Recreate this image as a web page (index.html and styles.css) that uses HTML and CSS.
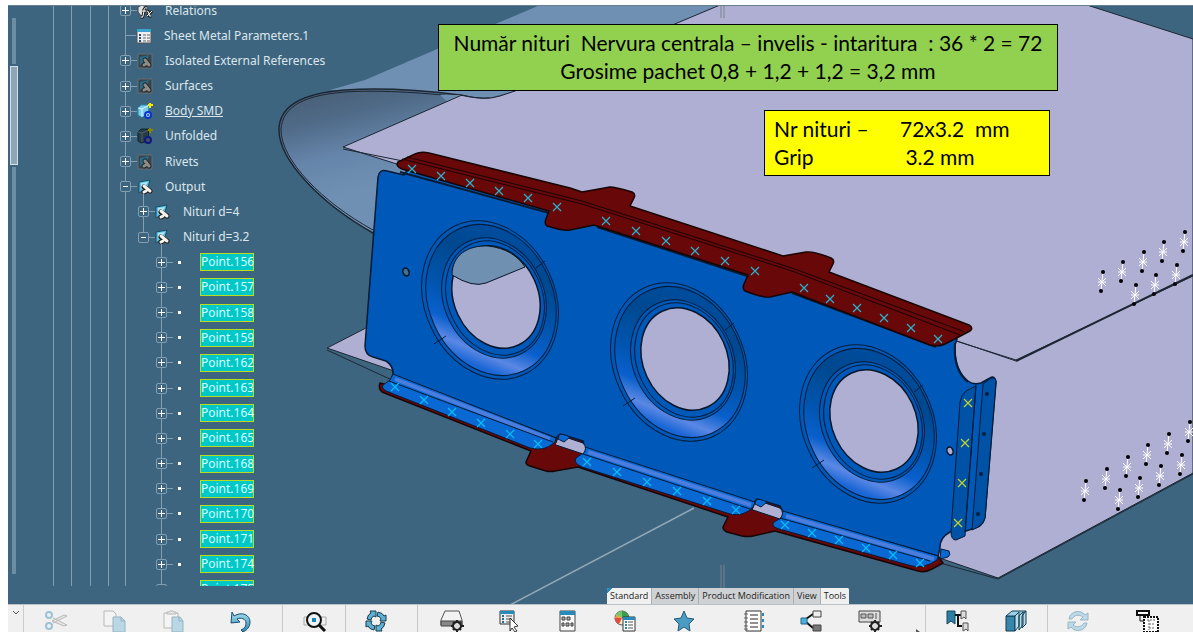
FILE: index.html
```
<!DOCTYPE html>
<html lang="ro">
<head>
<meta charset="utf-8">
<title>Nervura centrala</title>
<link rel="stylesheet" href="styles.css">
</head>
<body>
<svg class="defs" aria-hidden="true">
  <defs>
    <linearGradient id="nose" gradientUnits="userSpaceOnUse" x1="340" y1="88" x2="365" y2="190">
      <stop offset="0" stop-color="#4a6078"/><stop offset=".25" stop-color="#4f6a87"/><stop offset=".6" stop-color="#6584a9"/><stop offset="1" stop-color="#6f90b3"/>
    </linearGradient>
    <linearGradient id="ring" gradientUnits="userSpaceOnUse" x1="540" y1="260" x2="440" y2="350">
      <stop offset="0" stop-color="#004c9c"/><stop offset=".2" stop-color="#00488f"/><stop offset=".5" stop-color="#0054ae"/><stop offset=".72" stop-color="#0a60cc"/><stop offset=".86" stop-color="#5b88e4"/><stop offset=".96" stop-color="#1a66d6"/>
    </linearGradient>
    <linearGradient id="sky" x1="0" y1="0" x2="0" y2="1"><stop offset="0" stop-color="#a7dff0"/><stop offset="1" stop-color="#2f83ad"/></linearGradient>
    <g id="mark"><path d="M-4-4 4 4M4-4-4 4"/></g>
    <g id="rivet"><path d="M1-9-1 10M-4-3 4 5M4-3-4 5M-4 1H4" stroke="#fff" stroke-width="1"/><circle cx="1" cy="-9" r="2"/><circle cx="-1" cy="10" r="2"/></g>
    <g id="cutout">
      <ellipse cx="490" cy="300" rx="65" ry="82" transform="rotate(-25 490 300)" fill="#0059b8"/>
      <ellipse cx="491" cy="300" rx="62" ry="78" transform="rotate(-25 491 300)" fill="url(#ring)"/>
      <ellipse cx="494" cy="298" rx="50" ry="62" transform="rotate(-25 494 298)" fill="#0059b8"/>
      <ellipse cx="495" cy="298" rx="47" ry="59" transform="rotate(-25 495 298)" fill="none"/>
      <path d="m536 268 9-7M434 344l12-8" fill="none"/>
    </g>
    <symbol id="set" viewBox="0 0 16 16"><path d="M2 3 13 1 11 8 2 14Z" fill="#5bc0e0" stroke="#174c66"/><path d="m4 4 7-1-2 3-5 4Z" fill="#b4e8f5"/><path d="m7 8 6 4M7 13l2-1" stroke="#222" stroke-width="5" stroke-linecap="round"/><path d="m7 7 6 5M7 13l2-1" stroke="#f6f1ea" stroke-width="3" stroke-linecap="round"/></symbol>
    <symbol id="dimset" viewBox="0 0 16 16"><path d="M1 1h14v14H1Z" fill="#35454f" stroke="#6d6f72"/><path d="M3 4 12 2 10 8 3 12Z" fill="#286c8a"/><path d="m8 7 4 5M7 12l2-1" stroke="#26292c" stroke-width="5" stroke-linecap="round"/><path d="m8 7 4 5M7 12l2-1" stroke="#8f8b87" stroke-width="3" stroke-linecap="round"/></symbol>
    <symbol id="body" viewBox="0 0 16 16"><path d="m1 5 3-3 8 0-1 11-7 1-3-2Z" fill="#79cdea" stroke="#2b87b0"/><path d="m1 5 4 1 7-4M5 6v8" stroke="#def5fc" fill="none"/><path d="M13 0v5M11 2h5" stroke="#ffe800" stroke-width="2"/><circle cx="11" cy="12" r="3" fill="#b7d8ff" stroke="#0836c9" stroke-width="2"/><circle cx="11" cy="12" r="1" fill="#0836c9"/></symbol>
    <symbol id="dimbody" viewBox="0 0 16 16"><path d="m1 4 3-3 8 0-1 12-7 2-3-2Z" fill="#273c47" stroke="#14242c"/><path d="m1 4 4 1 7-3M5 5v9" stroke="#4b606b" fill="none"/><path d="M13 0v5M11 2h5" stroke="#8c8400" stroke-width="2"/><circle cx="11" cy="12" r="3" fill="#4a4f60" stroke="#0b1b80" stroke-width="2"/></symbol>
  </defs>
</svg>
<main class="app">
  <section class="viewport">
    <svg class="scene" viewBox="8 5 1185 599" preserveAspectRatio="xMinYMin slice" role="img" aria-label="Nervura centrala, model 3D">
      <g stroke="#1d2733" stroke-linejoin="round">
        <path stroke="none" fill="#6f90b3" d="M330 90 365 80 540 5 720 5 515 91 485 99Z"/>
        <path fill="url(#nose)" stroke-width="1.500" d="M460 95C420 90 375 88 345 90 305 93 279 104 279 130 279 160 320 203 373 233L450 320 560 300 560 120Z"/>
        <path fill="none" d="M460 97C420 92 375 90 345 92 307 95 282 105 281 130 281 160 322 202 373 230"/>
        <path fill="#6f90b3" stroke="none" d="M440 95 460 95 490 99 515 91 500 150Z"/>
        <path fill="#afaed3" d="M327 348 364 329 452 277 470 285 486 283 524 267 650 200 1193 180V473L998 578Z"/>
        <path fill="none" d="m327 350 67 31M940 563l58 16 195-105"/>
        <path fill="#afaed3" d="M343 147 462 95Q485 101 500 96L515 91 720 5H1087L1193 39V276L1016 360Z"/>
        <path fill="none" stroke-width="2" d="m1016 361 177-86"/>
        <path fill="none" d="m343 149 60 12M957 341l59 20M460 95Q478 99 490 98"/>
      </g>
      <path d="M694 508 510 605" stroke="#93a8b5" stroke-width="1.500"/>
      <path d="M721 565v24M724 565v24M721 5v13M724 5v13" stroke="#78848c"/>

      <path fill="#690808" stroke="#180404" stroke-width="1.500" stroke-linejoin="round" d="M380 383Q378 389 382 392L531 451 526 462Q526 465 530 466L546 471Q550 472 555 471L578 467 728 517 723 527Q723 530 727 532L742 536Q748 537 753 536L775 531 918 571Q925 573 932 569L943 563 930 545 560 430Z"/>
      <path fill="#0059b8" stroke="#041b36" stroke-width="1.500" stroke-linejoin="round" d="M387 171Q379 169 378 177L365 346Q365 355 373 357L386 361Q394 366 393 376L556 438 560 434 583 441 585 449 753 503 757 499 780 506 783 512 938 556 940 549Q939 538 950 532L966 531 978 527Q984 524 985 517L996 382Q995 375 990 378L981 383Q973 385 968 381 954 370 955 345L957 339 600 217 407 170 404 175Z"/>
      <path fill="none" stroke="#041b36" stroke-width="2" d="m400 172 149 41M597 227l150 49M792 293l144 54M955 343Q953 370 968 382"/>
      <path fill="#690808" stroke="#180404" stroke-width="1.500" stroke-linejoin="round" d="M398 162 415 154Q421 151 429 153L570 188 582 192 610 187Q615 187 632 192 636 194 634 198L630 206 783 256 806 252Q814 251 831 258 835 260 833 264L829 272 969 325Q974 328 970 331L945 344Q939 347 930 345L792 292 770 297Q763 298 745 291 742 289 744 284L748 275 594 225 570 230Q563 231 547 226 544 224 546 219L549 211 402 169Q395 166 398 162Z"/>
      <path fill="none" stroke="#180404" d="m402 159 180 45 210 67 168 64M407 157l175 44 210 67 173 64"/>

      <g stroke="#031d3c" stroke-width="1">
        <use href="#cutout"/><use href="#cutout" x="189" y="62"/><use href="#cutout" x="378" y="124"/>
      </g>
      <g stroke="#06162a" fill="#afaed3" stroke-width="1.500">
        <ellipse cx="496" cy="297" rx="42" ry="53" transform="rotate(-25 496 297)"/>
        <path fill="#7090b2" stroke-width="1" d="M452 275C452 255 468 245 488 246 506 248 518 256 525 267L486 283Q473 288 452 275Z"/>
        <ellipse cx="685" cy="359" rx="42" ry="53" transform="rotate(-25 685 359)"/>
        <ellipse cx="874" cy="421" rx="42" ry="53" transform="rotate(-25 874 421)"/>
        <ellipse cx="406" cy="272" rx="3" ry="4" transform="rotate(-20 406 272)" fill="#456f8f"/>
        <ellipse cx="950" cy="451" rx="3" ry="4" transform="rotate(-20 950 451)"/>
      </g>

      <g stroke="#041b36" stroke-linejoin="round" fill="#0a68d2">
        <path d="M390 380 383 385Q381 388 386 391L530 448Q545 452 555 442L556 438 393 374Z"/>
        <path d="M583 453 576 458Q573 463 582 467L730 514Q744 517 753 507L755 502 585 447Z"/>
        <path d="M781 518 774 522Q770 526 779 529L912 566Q924 569 937 560L938 556 783 511Z"/>
        <path d="m941 549 8 2q2 4-1 6l-8 2Z"/>
        <path fill="#afaed3" d="m556 443 3-8 9 3 15 5q5 5 0 11l-27-9M753 508l3-8 9 3 15 5q5 5 0 11l-27-9"/>
        <path d="m558 439 1-4q3-2 11 2l-6 5ZM755 504l1-4q3-2 11 2l-6 5Z"/>
      </g>
      <g stroke="#4a7ddd" stroke-width="4"><path d="m395 379 155 60M588 452l163 53M786 516l148 43"/></g>
      <path fill="none" stroke="#041b36" d="m389 381 164 61M583 454l170 56M780 518l150 43"/>

      <g stroke="#041b36" stroke-linejoin="round">
        <path fill="#0052a6" d="m976 386-10 5q-5 4-6 11l-9 130q0 8 5 8l9-4Z"/>
        <path fill="#0052a6" d="m983 384 8-6q5-1 5 4l-11 136q-1 5-7 9l-6 3Z"/>
        <path fill="none" d="m976 384-11 148"/>
      </g>
      <g fill="#06203d"><circle cx="987" cy="394" r="2"/><circle cx="984" cy="434" r="2"/><circle cx="981" cy="474" r="2"/><circle cx="978" cy="514" r="2"/></g>

      <g stroke="#27b4cf" stroke-width="1.200">
        <use href="#mark" x="412" y="169"/><use href="#mark" x="441" y="176"/><use href="#mark" x="470" y="183"/><use href="#mark" x="499" y="191"/><use href="#mark" x="528" y="198"/><use href="#mark" x="557" y="207"/><use href="#mark" x="606" y="221"/><use href="#mark" x="636" y="231"/><use href="#mark" x="666" y="241"/><use href="#mark" x="695" y="251"/><use href="#mark" x="725" y="261"/><use href="#mark" x="755" y="271"/><use href="#mark" x="804" y="288"/><use href="#mark" x="830" y="299"/><use href="#mark" x="857" y="308"/><use href="#mark" x="884" y="318"/><use href="#mark" x="911" y="328"/><use href="#mark" x="938" y="339"/>
      </g>
      <g stroke="#08bdf6" stroke-width="1.200">
        <use href="#mark" x="395" y="387"/><use href="#mark" x="424" y="400"/><use href="#mark" x="452" y="412"/><use href="#mark" x="481" y="423"/><use href="#mark" x="510" y="434"/><use href="#mark" x="538" y="444"/><use href="#mark" x="587" y="462"/><use href="#mark" x="617" y="472"/><use href="#mark" x="647" y="482"/><use href="#mark" x="677" y="491"/><use href="#mark" x="707" y="501"/><use href="#mark" x="736" y="510"/><use href="#mark" x="785" y="525"/><use href="#mark" x="812" y="533"/><use href="#mark" x="839" y="540"/><use href="#mark" x="866" y="548"/><use href="#mark" x="893" y="555"/><use href="#mark" x="920" y="563"/>
      </g>
      <g stroke="#c3d22c" stroke-width="1.200">
        <use href="#mark" x="968" y="403"/><use href="#mark" x="965" y="443"/><use href="#mark" x="962" y="483"/><use href="#mark" x="958" y="523"/>
      </g>
      <use href="#rivet" x="1102" y="281"/><use href="#rivet" x="1122" y="271"/><use href="#rivet" x="1143" y="261"/><use href="#rivet" x="1163" y="251"/><use href="#rivet" x="1184" y="241"/><use href="#rivet" x="1135" y="294"/><use href="#rivet" x="1155" y="284"/><use href="#rivet" x="1176" y="274"/>
      <use href="#rivet" x="1085" y="490"/><use href="#rivet" x="1106" y="478"/><use href="#rivet" x="1127" y="466"/><use href="#rivet" x="1147" y="454"/><use href="#rivet" x="1168" y="443"/><use href="#rivet" x="1189" y="431"/><use href="#rivet" x="1119" y="499"/><use href="#rivet" x="1139" y="487"/><use href="#rivet" x="1160" y="475"/><use href="#rivet" x="1181" y="464"/>
    </svg>

    <div class="sidebar">
      <div class="scroll"><i class="track track-top"></i><i class="thumb"></i><i class="track track-rest"></i></div>
      <div class="tree-clip">
        <ul class="tree">
          <li><button class="toggle" aria-label="Expand"></button><svg class="icon" viewBox="0 0 16 16"><path d="m1 4 4-2 4 2v5l-5 4-3-4Z" fill="#ddd" stroke="#444"/><path d="M10 5q-3-1-3 3l-1 5q0 2-2 1M5 8h4M10 8q2 0 2 3t2 2M15 8l-5 5" fill="none" stroke="#222" stroke-width="3"/><path d="M10 5q-3-1-3 3l-1 5q0 2-2 1M5 8h4M10 8q2 0 2 3t2 2M15 8l-5 5" fill="none" stroke="#fff"/></svg><a href="#">Relations</a></li>
          <li><span class="stem"></span><svg class="icon" viewBox="0 0 16 16"><path d="M1 2h14v13H1Z" fill="#eee" stroke="#555"/><path d="M1 1h14v3H1Z" fill="#38a3cc"/><path d="M3 6h2v2H3zM3 9h2v2H3zM3 12h2v2H3z" fill="#224f80"/><path d="M7 7h3M11 7h3M7 10h3M11 10h3M7 13h3M11 13h3" stroke="#666"/></svg><a href="#">Sheet Metal Parameters.1</a></li>
          <li><button class="toggle" aria-label="Expand"></button><svg class="icon"><use href="#dimset"/></svg><a href="#">Isolated External References</a></li>
          <li><button class="toggle" aria-label="Expand"></button><svg class="icon"><use href="#dimset"/></svg><a href="#">Surfaces</a></li>
          <li><button class="toggle" aria-label="Expand"></button><svg class="icon"><use href="#body"/></svg><a class="current" href="#">Body SMD</a></li>
          <li><button class="toggle" aria-label="Expand"></button><svg class="icon"><use href="#dimbody"/></svg><a href="#">Unfolded</a></li>
          <li><button class="toggle" aria-label="Expand"></button><svg class="icon"><use href="#dimset"/></svg><a href="#">Rivets</a></li>
          <li><button class="toggle open" aria-label="Collapse"></button><svg class="icon"><use href="#set"/></svg><a href="#">Output</a></li>
          <li class="sub"><button class="toggle" aria-label="Expand"></button><svg class="icon"><use href="#set"/></svg><a href="#">Nituri d=4</a></li>
          <li class="sub last"><button class="toggle open" aria-label="Collapse"></button><svg class="icon"><use href="#set"/></svg><a href="#">Nituri d=3.2</a></li>
          <li class="point"><button class="toggle" aria-label="Expand"></button><i class="dot"></i><a href="#">Point.156</a></li>
          <li class="point"><button class="toggle" aria-label="Expand"></button><i class="dot"></i><a href="#">Point.157</a></li>
          <li class="point"><button class="toggle" aria-label="Expand"></button><i class="dot"></i><a href="#">Point.158</a></li>
          <li class="point"><button class="toggle" aria-label="Expand"></button><i class="dot"></i><a href="#">Point.159</a></li>
          <li class="point"><button class="toggle" aria-label="Expand"></button><i class="dot"></i><a href="#">Point.162</a></li>
          <li class="point"><button class="toggle" aria-label="Expand"></button><i class="dot"></i><a href="#">Point.163</a></li>
          <li class="point"><button class="toggle" aria-label="Expand"></button><i class="dot"></i><a href="#">Point.164</a></li>
          <li class="point"><button class="toggle" aria-label="Expand"></button><i class="dot"></i><a href="#">Point.165</a></li>
          <li class="point"><button class="toggle" aria-label="Expand"></button><i class="dot"></i><a href="#">Point.168</a></li>
          <li class="point"><button class="toggle" aria-label="Expand"></button><i class="dot"></i><a href="#">Point.169</a></li>
          <li class="point"><button class="toggle" aria-label="Expand"></button><i class="dot"></i><a href="#">Point.170</a></li>
          <li class="point"><button class="toggle" aria-label="Expand"></button><i class="dot"></i><a href="#">Point.171</a></li>
          <li class="point"><button class="toggle" aria-label="Expand"></button><i class="dot"></i><a href="#">Point.174</a></li>
          <li class="point"><button class="toggle" aria-label="Expand"></button><i class="dot"></i><a href="#">Point.175</a></li>
        </ul>
      </div>
    </div>

    <div class="note note-green"><p>Număr nituri&nbsp; Nervura centrala – invelis - intaritura&nbsp; : 36 * 2 = 72</p><p>Grosime pachet 0,8 + 1,2 + 1,2 = 3,2 mm</p></div>
    <dl class="note note-yellow"><dt>Nr nituri –</dt><dd>72x3.2&nbsp; mm</dd><dt>Grip</dt><dd>&nbsp;3.2 mm</dd></dl>

    <nav class="tabs">
      <button class="tab active first">Standard</button><button class="tab">Assembly</button><button class="tab">Product Modification</button><button class="tab">View</button><button class="tab active">Tools</button>
    </nav>
  </section>

  <div class="toolbar">
    <button class="collapse" aria-label="Options"><svg viewBox="0 0 8 6"><path d="m1 1 3 3 3-3" fill="none" stroke="#555"/></svg></button>
    <div class="group edit">
      <button class="tool faded" aria-label="Cut"><svg viewBox="0 0 24 24"><path d="m9 9 14 7-3 1L8 12M9 14l14-7-3-1L8 12" fill="#ddd" stroke="#777"/><circle cx="5" cy="6" r="3" fill="none" stroke="#368cb5" stroke-width="2"/><circle cx="5" cy="17" r="3" fill="none" stroke="#368cb5" stroke-width="2"/></svg></button>
      <button class="tool faded" aria-label="Copy"><svg viewBox="0 0 24 24"><path d="M1 2h9l3 3v12H1Z" fill="#fafafa" stroke="#777"/><path d="M10 8h8l4 4v11H10Z" fill="#78bad9" stroke="#2c6c8c"/><path d="M18 8v4h4" fill="none" stroke="#2c6c8c"/></svg></button>
      <button class="tool faded" aria-label="Paste"><svg viewBox="0 0 24 24"><path d="M2 4h14v15H2Z" fill="#fafafa" stroke="#777"/><path d="M5 5V3h2l1-1h3l1 1h2v2Z" fill="#ddd" stroke="#777"/><path d="M10 8h8l3 4v11H10Z" fill="#78bad9" stroke="#2c6c8c"/><path d="M17 8v4h4" fill="none" stroke="#2c6c8c"/></svg></button>
    </div>
    <div class="group undo"><button class="tool" aria-label="Undo"><svg viewBox="0 0 24 24"><path d="m3 3 2 4c8-5 16-1 16 6 0 5-3 8-7 10l-2-2c4-2 5-4 5-7 0-4-5-6-9-4l3 3-9 1Z" fill="url(#sky)" stroke="#16506f"/></svg></button></div>
    <div class="group find"><button class="tool" aria-label="Fit"><svg viewBox="0 0 24 24"><path d="M1 8h22v8H1Z" fill="#eee" stroke="#aaa"/><circle cx="11" cy="11" r="7" fill="#eef3f5" stroke="#111" stroke-width="2"/><path d="m16 16 6 6" stroke="#111" stroke-width="3"/><path d="M9 9h4v4H9Z" fill="#1b84ba"/></svg></button></div>
    <div class="group update"><button class="tool" aria-label="Update"><svg viewBox="0 0 24 24"><g id="turn" fill="#5fb0d2" stroke="#153c50"><path d="M3 10Q4 5 7 4L6 2h6v6L10 7Q7 8 7 11Z"/><path d="M3 10Q4 5 7 4L6 2h6v6L10 7Q7 8 7 11Z" transform="rotate(90 12 12)"/><path d="M3 10Q4 5 7 4L6 2h6v6L10 7Q7 8 7 11Z" transform="rotate(180 12 12)"/><path d="M3 10Q4 5 7 4L6 2h6v6L10 7Q7 8 7 11Z" transform="rotate(270 12 12)"/></g></svg></button></div>
    <div class="group views">
      <button class="tool" aria-label="Disk settings"><svg viewBox="0 0 24 24"><path d="M5 2h14l3 9v5H1v-5Z" fill="#f2f2f2" stroke="#555"/><path d="M1 12h21v5H1Z" fill="#888" stroke="#444"/><circle cx="17" cy="17" r="4" fill="#ddd" stroke="#222" stroke-width="2"/><path d="M17 11v3M17 20v3M11 17h3M20 17h4M13 13l2 2M19 19l2 2M21 13l-2 2M15 19l-2 2" stroke="#222" stroke-width="2"/></svg></button>
      <button class="tool" aria-label="Select"><svg viewBox="0 0 24 24"><path d="M2 2h14v13H2Z" fill="#eee" stroke="#333"/><path d="M2 2h14v3H2Z" fill="#288abb"/><path d="M4 7h2M4 10h2M4 13h2" stroke="#246b95" stroke-width="2"/><path d="M8 7h6M8 10h6M8 13h6" stroke="#555"/><path d="m12 9 8 8-4 1 3 4-2 1-3-4-2 3Z" fill="#fff" stroke="#333"/></svg></button>
      <button class="tool" aria-label="Grid"><svg viewBox="0 0 24 24"><path d="M4 2h15v20H4Z" fill="#f8f8f8" stroke="#444"/><path d="M4 2h15v4H4Z" fill="#288abb"/><path d="M6 8h3v3H6zM11 8h3v3h-3zM6 14h2v3H6zM10 14h3v3h-3zM15 14h2v3h-2z" fill="#aaa" stroke="#444"/></svg></button>
      <button class="tool" aria-label="Colors"><svg viewBox="0 0 24 24"><circle cx="8" cy="9" r="7" fill="#f5eecb" stroke="#555"/><path d="M8 9V2a7 7 0 0 1 7 7Z" fill="#3c9e4c"/><path d="M8 9V2a7 7 0 0 0-6 4Z" fill="#76c66a"/><path d="m8 9-7 0a7 7 0 0 0 4 6Z" fill="#e9473b"/><path d="m8 9-6-3-1 3Z" fill="#ee9a3f"/><path d="M9 8h12v14H9Z" fill="#fff" stroke="#333"/><path d="M9 8h12v3H9Z" fill="#288abb"/><path d="M11 13h2M11 16h2M11 19h2" stroke="#288abb" stroke-width="2"/><path d="M14 13h5M14 16h5M14 19h5" stroke="#555"/></svg></button>
      <button class="tool" aria-label="Favorites"><svg viewBox="0 0 24 24"><path d="m12 2 3 7 7 1-5 5 1 7-6-4-6 4 1-7-5-5 7-1Z" fill="#4a9cc3" stroke="#235b78"/></svg></button>
    </div>
    <div class="group data">
      <button class="tool" aria-label="Notebook"><svg viewBox="0 0 24 24"><path d="M4 2h15v20H4Z" fill="#fff" stroke="#333"/><path d="M2 5h4M2 9h4M2 13h4M2 17h4M2 20h4" stroke="#666"/><path d="M8 6h8M8 10h8M8 14h8M8 18h8" stroke="#222"/><path d="M20 4h2v3h-2zM20 10h2v3h-2zM20 16h2v3h-2z" fill="#288abb"/></svg></button>
      <button class="tool" aria-label="Links"><svg viewBox="0 0 24 24"><path d="M6 10 13 5M6 13l7 6" stroke="#111" stroke-width="2"/><path d="M1 9h6v6H1Z" fill="#48b1dc" stroke="#266582"/><path d="M13 2h8v6h-8Z" fill="#eee" stroke="#444"/><path d="M13 16h8v6h-8Z" fill="#777" stroke="#444"/></svg></button>
      <button class="tool" aria-label="Panel settings"><svg viewBox="0 0 24 24"><path d="M1 2h21v11H1Z" fill="#ddd" stroke="#444"/><path d="M3 5h5v4H3zM10 5h5v4h-5z" fill="#bbb" stroke="#555"/><path d="M18 4v6" stroke="#555"/><circle cx="17" cy="17" r="4" fill="#ddd" stroke="#222" stroke-width="2"/><path d="M17 11v3M17 20v3M11 17h3M20 17h4M13 13l2 2M19 19l2 2M21 13l-2 2M15 19l-2 2" stroke="#222" stroke-width="2"/></svg></button>
      <svg class="more" viewBox="0 0 4 6"><path d="m0 0 4 3-4 3Z" fill="#555"/></svg>
    </div>
    <div class="group catalog">
      <button class="tool" aria-label="Bookmarks"><svg viewBox="0 0 24 24"><path d="M1 2h8v13l-4-3-4 3Z" fill="#2d7da5" stroke="#154860"/><path d="M9 6h6M12 6v11h4" fill="none" stroke="#111" stroke-width="2"/><path d="M15 2h5v8l-2-2-3 2ZM17 14h5v8l-2-2-3 2Z" fill="#ddd" stroke="#555"/></svg></button>
      <button class="tool" aria-label="Catalog"><svg viewBox="0 0 24 24"><path d="M1 7h9v15H1Z" fill="#3986ad" stroke="#133f55"/><path d="m1 7 6-5h14l-7 5Z" fill="#9cd0e5" stroke="#133f55"/><path d="m10 7 4-4v14l-4 5ZM14 7l4-4v13l-4 5ZM17 7l4-5v13l-4 4Z" fill="#b9dcea" stroke="#133f55"/></svg></button>
    </div>
    <div class="group sync">
      <button class="tool faded" aria-label="Refresh"><svg viewBox="0 0 24 24"><path d="M3 10C4 2 15 0 19 6l3-2v7h-8l3-3C13 5 8 6 6 10ZM21 14c-1 8-12 10-16 4l-3 2v-7h8l-3 3c4 3 9 2 11-2Z" fill="#7dbedc" stroke="#2f6e8e"/></svg></button>
      <button class="tool" aria-label="Structure"><svg viewBox="0 0 24 24"><path d="M1 2h12v4H1Z" fill="#fff" stroke="#111" stroke-width="2"/><path d="M4 6v6h4" fill="none" stroke="#111"/><path d="M8 8h14v15H8Z" fill="#fff" stroke="#111" stroke-width="2" stroke-dasharray="2 1"/><path d="M11 11h8M13 11v10M13 15h6M13 19h6" fill="none" stroke="#666" stroke-dasharray="2 1"/></svg></button>
    </div>
  </div>
</main>
</body>
</html>
```
FILE: styles.css
```
* { box-sizing: border-box; }
body { margin: 0; background: #fff; font-family: "Noto Sans", "Open Sans", sans-serif; }
button { margin: 0; padding: 0; border: 0; background: none; font: inherit; color: inherit; }
.defs { position: absolute; width: 0; height: 0; }
.app { display: flex; flex-direction: column; height: 100vh; padding: 5px 0 0 8px; }
.viewport { position: relative; flex: 1; min-height: 0; overflow: hidden; background: #3d657f; border-top: 1px solid #667f90; }
.scene { position: absolute; inset: -1px 0 0 0; width: 100%; height: calc(100% + 1px); }

.sidebar { position: relative; display: flex; height: 100%; width: 340px; padding-bottom: 18px; }
.scroll { display: flex; flex-direction: column; align-items: center; gap: 2px; width: 8px; margin: 12px 0 12px 2px; }
.track { width: 4px; background: #6d8da1; }
.track-top { flex: 46; }
.thumb { flex: 98; width: 8px; background: #8ea6b5; border: 1px solid #d5dfe6; }
.track-rest { flex: 408; }

.tree-clip { flex: 1; overflow: hidden; }
.tree {
  display: grid; grid-auto-rows: 1fr; height: 604px; margin: -8px 0 0; padding: 0 0 0 102px; list-style: none;
  font-size: 12px; color: #dce6ed;
  background:
    linear-gradient(#829fb1, #829fb1) 35px 0 / 1px 100% no-repeat,
    linear-gradient(#829fb1, #829fb1) 53px 0 / 1px 100% no-repeat,
    linear-gradient(#829fb1, #829fb1) 72px 0 / 1px 100% no-repeat,
    linear-gradient(#829fb1, #829fb1) 90px 0 / 1px 100% no-repeat,
    linear-gradient(#829fb1, #829fb1) 107px 0 / 1px 100% no-repeat;
}
.tree li { position: relative; display: flex; align-items: center; }
.tree a { color: inherit; text-decoration: none; white-space: nowrap; line-height: 16px; }
.tree a.current { text-decoration: underline; }
.toggle {
  position: relative; width: 11px; height: 11px; margin-right: 6px; border: 1px solid #829fb1; border-radius: 2px;
  background:
    linear-gradient(#fff, #fff) center / 7px 1px no-repeat,
    linear-gradient(#fff, #fff) center / 1px 7px no-repeat,
    #3d657f;
}
.toggle.open { background: linear-gradient(#fff, #fff) center / 5px 1px no-repeat, #3d657f; }
.toggle::after, .stem { content: ""; background: #829fb1; height: 1px; width: 6px; }
.toggle::after { position: absolute; left: 10px; top: 4px; }
.stem { width: 11px; margin: 0 0 0 5px; }
.icon { width: 16px; height: 16px; margin-right: 12px; overflow: visible; }
.sub { padding-left: 18px; }
.sub .icon { margin-left: -1px; margin-right: 13px; }
.sub::before, .point::before { content: ""; position: absolute; top: 0; bottom: 0; left: 23px; width: 1px; background: #829fb1; }
.sub::before { top: -6px; }
.sub.last::before { bottom: 50%; }
.point { padding-left: 36px; }
.point::before { left: 41px; top: -6px; }
.dot { width: 3px; height: 3px; margin: 0 19px 0 5px; background: #fff; }
.tree .point a { width: 54px; background: #00c8c8; border: 1px solid #b8dc1e; color: #d5ffff; }

.note { position: absolute; margin: 0; border: 1px solid #000; font: 21px/28px Lato, sans-serif; color: #000; white-space: nowrap; }
.note p { margin: 0; }
.note-green { left: 430px; top: 18px; width: 620px; padding: 4px 0 5px; background: #92d050; text-align: center; }
.note-yellow { left: 756px; top: 104px; width: 286px; padding: 4px 9px; background: #ff0; display: grid; grid-template-columns: 126px auto; }
.note dd { margin: 0; }

.tabs { position: absolute; left: 599px; bottom: 0; display: flex; height: 16px; background: #cfd2d4; border-radius: 2px 2px 0 0; overflow: hidden; }
.tab { padding: 0 3px; font: 9px/16px "Open Sans", "Noto Sans", sans-serif; color: #222; border-right: 1px solid #a9adb0; white-space: nowrap; }
.tab.active { background: #f0f0f0; }
.tab:last-child { border-right: 0; }
.tab.first { background: linear-gradient(135deg, #288abb 4px, #f0f0f0 4px); }

.toolbar { display: flex; flex: 0 0 28px; height: 28px; overflow: hidden; background: #f0f0f0; border-top: 1px solid #b9c0c4; }
.collapse { flex: 0 0 16px; display: flex; justify-content: center; padding-top: 5px; border-right: 1px solid #ccc; }
.collapse svg { width: 8px; height: 6px; }
.group { display: flex; flex: none; padding-top: 4px; }
.tool { width: 24px; height: 24px; }
.tool svg { display: block; width: 24px; height: 24px; }
.faded { opacity: .45; }
.undo, .find, .update, .data, .catalog { border-right: 1px solid #c8c8c8; }
.edit { gap: 35px; padding-left: 20px; }
.undo { padding-left: 43px; padding-right: 29px; }
.find { padding-left: 20px; padding-right: 18px; }
.update { padding-left: 18px; padding-right: 29px; }
.views { gap: 34px; padding-left: 22px; }
.data { gap: 34px; padding-left: 46px; padding-right: 5px; }
.more { width: 4px; height: 6px; margin-top: 20px; }
.catalog { gap: 35px; padding-left: 20px; padding-right: 18px; }
.sync { gap: 46px; padding-left: 18px; }
```
